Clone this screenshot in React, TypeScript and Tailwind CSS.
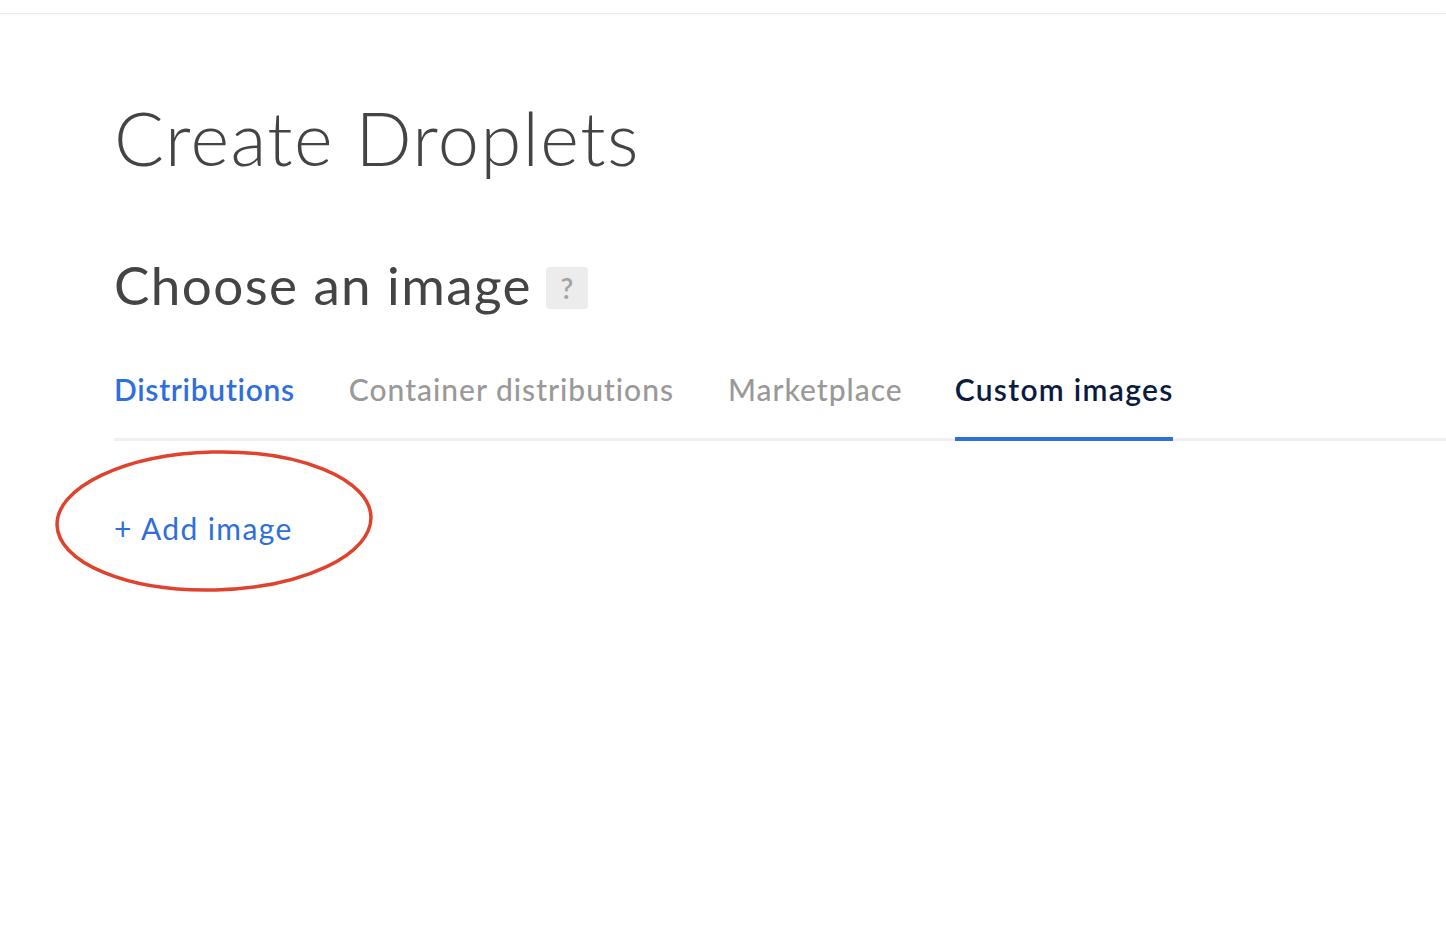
import React from "react";

export default function App() {
  const font = { fontFamily: "Lato, 'Noto Sans', sans-serif" };
  return (
    <div className="min-h-[950px] w-full bg-white" style={font}>
      <div className="h-[14px] w-full border-b border-[#ececec] shadow-[0_1px_2px_rgba(0,0,0,0.04)]" />
      <div className="pl-[114px]">
        <h1 className="mt-[87px] text-[74px] font-light leading-none tracking-[1.4px] text-[#444444]">
          Create Droplets
        </h1>
        <div className="mt-[83px] flex items-center gap-[14px]">
          <h2 className="text-[53px] font-normal leading-none tracking-[1.4px] text-[#444444]">Choose an image</h2>
          <span className="mt-[6px] flex h-[42px] w-[42px] items-center justify-center rounded-[4px] bg-[#ececec] text-[28px] font-semibold leading-none text-[#a3a3a3]">
            ?
          </span>
        </div>
        <div className="mt-[63px] flex border-b-[3px] border-[#f0f0f0]">
          <div className="mr-[54px] pb-[34px] text-[30px] font-semibold leading-none tracking-[0.7px] text-[#2f6fdb]">Distributions</div>
          <div className="mr-[54px] pb-[34px] text-[30px] font-medium leading-none tracking-[1px] text-[#999999]">Container distributions</div>
          <div className="mr-[52px] pb-[34px] text-[30px] font-medium leading-none tracking-[1px] text-[#999999]">Marketplace</div>
          <div className="relative pb-[34px] text-[30px] font-semibold leading-none tracking-[1.3px] text-[#0b1a3f]">
            Custom images
            <div className="absolute bottom-[-3px] left-0 right-[1px] h-[4px] bg-[#2f6fdb]" />
          </div>
        </div>
        <div className="relative mt-[72px] inline-block">
          <span className="text-[30px] font-normal leading-none tracking-[1.4px] text-[#2f6fdb]">+ Add image</span>
          <svg className="pointer-events-none absolute left-[-60px] top-[-64px]" width="320" height="146" viewBox="0 0 320 146">
            <ellipse cx="160" cy="72" rx="157" ry="69" fill="none" stroke="#e0432d" strokeWidth="3.5" transform="rotate(-1.5 160 72)" />
          </svg>
        </div>
      </div>
    </div>
  );
}
